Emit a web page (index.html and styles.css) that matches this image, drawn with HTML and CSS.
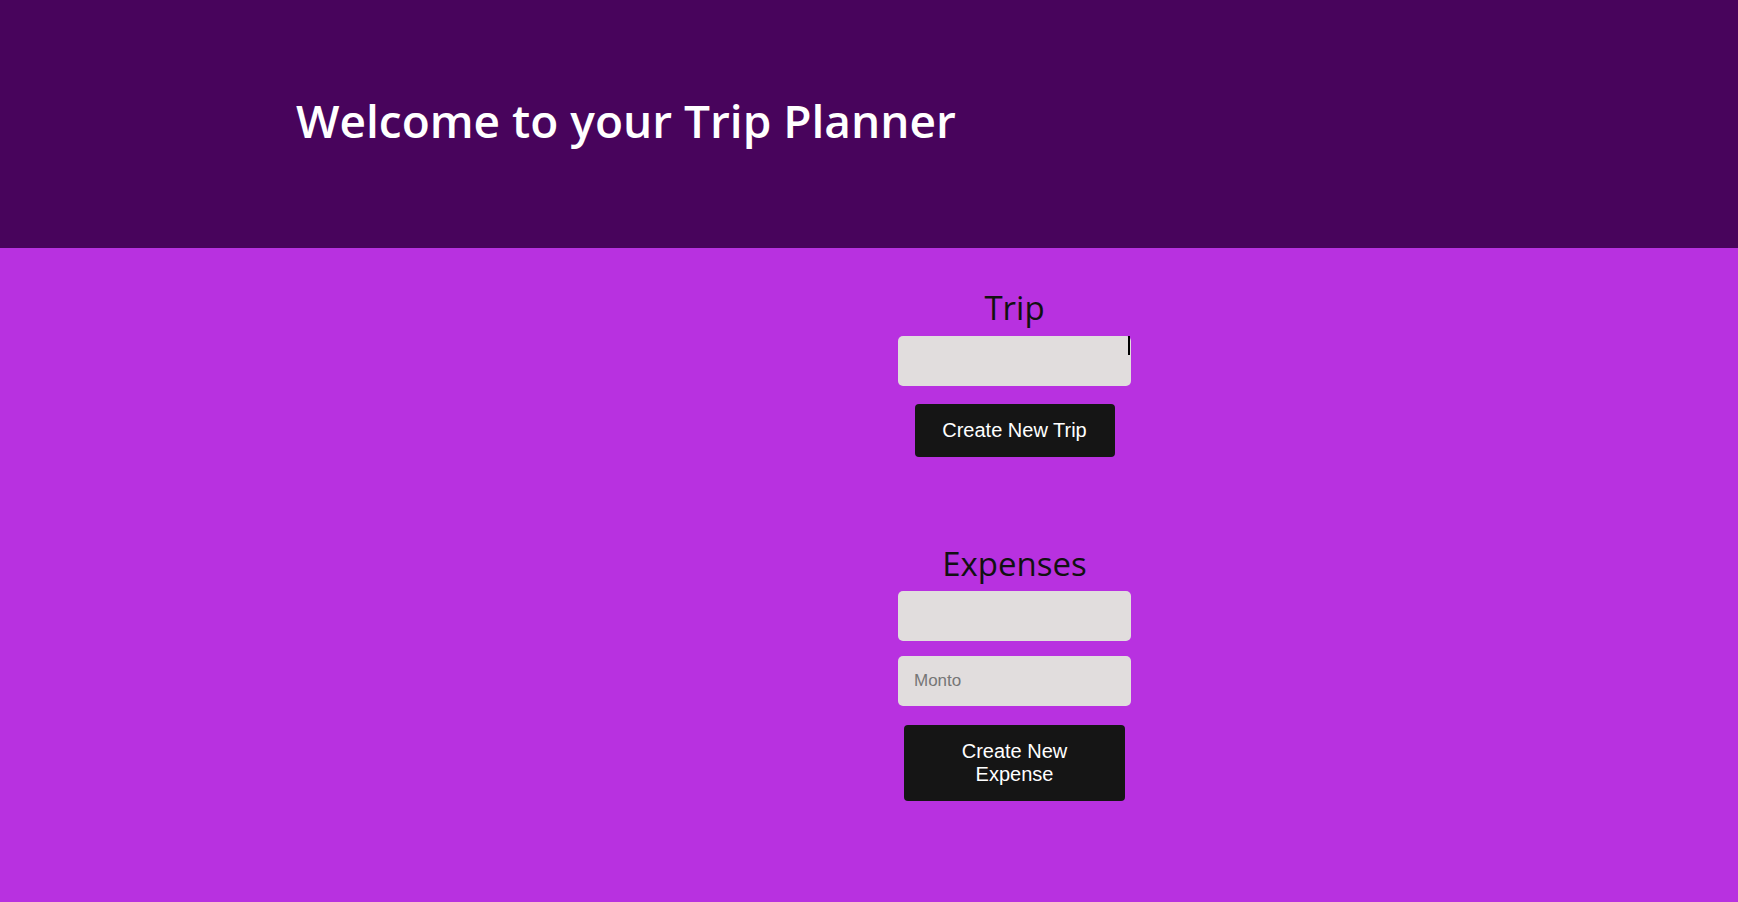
FILE: index.html
```html
<!DOCTYPE html>
<html lang="en">
<head>
<meta charset="utf-8">
<title>Trip Planner</title>
<link rel="stylesheet" href="styles.css">
</head>
<body>
<header class="top">
  <h1 class="title">Welcome to your Trip Planner</h1>
</header>
<main class="page">
  <aside class="side"></aside>
  <section class="content">
    <div class="block">
      <h2 class="heading heading-trip">Trip</h2>
      <div class="field field-focus"><input class="input" type="text"></div>
      <button class="btn btn-trip">Create New Trip</button>
    </div>
    <div class="block">
      <h2 class="heading heading-exp">Expenses</h2>
      <div class="field field-first"><input class="input" type="text"></div>
      <div class="field field-second"><input class="input" type="text" placeholder="Monto"></div>
      <button class="btn btn-exp">Create New Expense</button>
    </div>
  </section>
</main>
</body>
</html>
```
FILE: styles.css
```css
* { box-sizing: border-box; }
html, body { margin: 0; padding: 0; }
body {
  background: #b831e0;
  min-height: 902px;
  font-family: "Open Sans", "Lato", sans-serif;
}
.top {
  background: #48045c;
  height: 248px;
  padding: 93px 0 0 296px;
}
.title {
  margin: 0;
  color: #ffffff;
  font-size: 46px;
  line-height: 54px;
  font-weight: 620;
}
.page {
  display: grid;
  grid-template-columns: 291px 1fr;
}
.content {
  display: flex;
  flex-direction: column;
  align-items: center;
}
.block {
  display: flex;
  flex-direction: column;
  align-items: center;
}
.heading {
  margin: 0;
  color: #111111;
  font-size: 33px;
  line-height: 40px;
  font-weight: 500;
}
.heading-trip { margin-top: 40px; }
.heading-exp { margin-top: 87px; }
.field {
  position: relative;
  width: 233px;
  height: 50px;
}
.field-focus { margin-top: 8px; }
.field-focus::after {
  content: "";
  position: absolute;
  right: 1px;
  top: 0;
  width: 2px;
  height: 19px;
  background: #000;
}
.field-first { margin-top: 7px; }
.field-second { margin-top: 15px; }
.input {
  display: block;
  width: 100%;
  height: 100%;
  border: none;
  outline: none;
  border-radius: 5px;
  background: #e1dddd;
  padding: 0 16px;
  font-family: "Liberation Sans", Arial, sans-serif;
  font-size: 17px;
  color: #222;
}
.input::placeholder { color: #767676; }
.btn {
  border: none;
  border-radius: 4px;
  background: #151515;
  color: #ffffff;
  font-family: "Liberation Sans", Arial, sans-serif;
  font-size: 20px;
  line-height: 23px;
  padding: 15px 27px;
  text-align: center;
}
.btn-trip { width: 200px; margin-top: 18px; }
.btn-exp { width: 221px; margin-top: 19px; }
```
